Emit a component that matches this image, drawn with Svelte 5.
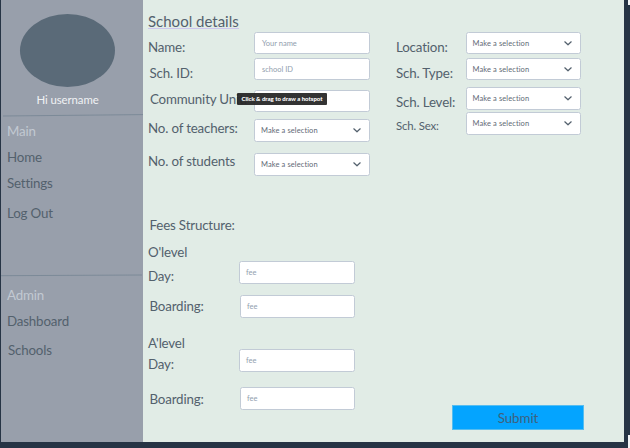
<script>
  // gap: space above the item; inset: shift from the column's left edge
  const nav = [
    { text: 'Home', gap: 6 },
    { text: 'Settings', gap: 6 },
    { text: 'Log Out', gap: 10 }
  ];
  const adminNav = [
    { text: 'Dashboard', gap: 6, inset: 0 },
    { text: 'Schools', gap: 9, inset: 1 }
  ];
  const labels = [
    { text: 'Name:', gap: 5, inset: 0 },
    { text: 'Sch. ID:', gap: 6, inset: 1.5 },
    { text: 'Community Unit:', gap: 6, inset: 2 },
    { text: 'No. of teachers:', gap: 8.5, inset: 0 },
    { text: 'No. of students', gap: 13.5, inset: 0 }
  ];
  const fields = [
    { hint: 'Your name', gap: 0, h: 22 },
    { hint: 'school ID', gap: 4, h: 22 },
    { hint: '', gap: 10, h: 22 },
    { select: true, gap: 7, h: 23 },
    { select: true, gap: 11, h: 23 }
  ];
  const rightLabels = [
    { text: 'Location:', gap: 0 },
    { text: 'Sch. Type:', gap: 6 },
    { text: 'Sch. Level:', gap: 9 },
    { text: 'Sch. Sex:', gap: 4, small: true }
  ];
  const rightFields = [
    { gap: 0, h: 22 },
    { gap: 4, h: 22 },
    { gap: 7, h: 23 },
    { gap: 2, h: 23 }
  ];
  const feeLabels = [
    { text: 'Fees Structure:', gap: 0, inset: 1.5 },
    { text: "O'level", gap: 7, inset: 0 },
    { text: 'Day:', gap: 4, inset: 0 },
    { text: 'Boarding:', gap: 10, inset: 1.5 },
    { text: "A'level", gap: 17, inset: 0 },
    { text: 'Day:', gap: 1, inset: 0 },
    { text: 'Boarding:', gap: 15, inset: 1.5 }
  ];
  const feeFields = [
    { gap: 0, inset: 0 },
    { gap: 11, inset: 1 },
    { gap: 31, inset: 0 },
    { gap: 15, inset: 1 }
  ];
</script>

{#snippet label(item)}
  <div class="label" class:small={item.small} style:margin-top="{item.gap}px" style:margin-left="{item.inset ?? 0}px">{item.text}</div>
{/snippet}

{#snippet select(item)}
  <div class="field select" class:short={item.h === 22} style:margin-top="{item.gap}px" style:height="{item.h}px">
    <span>Make a selection</span>
    <svg width="8" height="5" viewBox="0 0 8 5"><path d="M.8.8 4 3.8 7.2.8" fill="none" stroke="#53606d" stroke-width="1.2" stroke-linecap="round" stroke-linejoin="round" /></svg>
  </div>
{/snippet}

<div class="screen">
  <aside>
    <div class="avatar"></div>
    <div class="user">Hi username</div>
    <svg class="rule" width="142" height="3" viewBox="0 0 142 3"><path d="M2 2 142 .6" stroke="#7c8a98" /></svg>
    <div class="label heading main-heading">Main</div>
    {#each nav as item}{@render label(item)}{/each}
    <svg class="rule second" width="142" height="3" viewBox="0 0 142 3"><path d="M0 1.7 141 1" stroke="#7c8a98" /></svg>
    <div class="label heading admin-heading">Admin</div>
    {#each adminNav as item}{@render label(item)}{/each}
  </aside>

  <main>
    <h1>School details</h1>
    <section class="details">
      <div class="labels">
        {#each labels as item}{@render label(item)}{/each}
      </div>
      <div class="fields">
        {#each fields as item}
          {#if item.select}
            {@render select(item)}
          {:else}
            <div class="field short" style:margin-top="{item.gap}px" style:height="{item.h}px">{item.hint}</div>
          {/if}
        {/each}
        <div class="tooltip">Click &amp; drag to draw a hotspot</div>
      </div>
      <div class="right-labels">
        {#each rightLabels as item}{@render label(item)}{/each}
      </div>
      <div class="right-fields">
        {#each rightFields as item}{@render select(item)}{/each}
      </div>
    </section>

    <section class="fees">
      <div class="fee-labels">
        {#each feeLabels as item}{@render label(item)}{/each}
      </div>
      <div class="fee-fields">
        {#each feeFields as item}
          <div class="field fee" style:margin-top="{item.gap}px" style:margin-left="{item.inset}px">fee</div>
        {/each}
      </div>
      <button>Submit</button>
    </section>
  </main>
  <div class="edge"><i></i><i class="bottom"></i></div>
</div>

<style>
  .screen {
    display: flex;
    box-sizing: border-box;
    width: 630px;
    height: 448px;
    padding: 0 0 6px 1px;
    overflow: hidden;
    background: #263445;
    color: #53616d;
    font-family: Lato, sans-serif;
    font-size: 13.33px;
    letter-spacing: -0.17px;
  }
  aside {
    box-sizing: border-box;
    width: 142px;
    padding: 14px 0 0 6px;
    background: #989fab;
  }
  .avatar {
    width: 95px;
    height: 73px;
    margin-left: 13px;
    border-radius: 50%;
    background: #5a6a78;
  }
  .user {
    width: 121px;
    margin-top: 5px;
    color: #f0f2f4;
    font-size: 11.4px;
    letter-spacing: -0.08px;
    line-height: 16px;
    text-align: center;
  }
  .rule {
    display: block;
    margin: 6px 0 0 -6px;
  }
  .rule.second { margin-top: 51px; }
  .label {
    height: 20px;
    line-height: 20px;
    white-space: nowrap;
  }
  .small { font-size: 11.4px; }
  .heading { color: #c2c9d2; }
  .main-heading { margin-top: 4px; }
  .admin-heading { margin-top: 8px; }
  main {
    box-sizing: border-box;
    width: 481px;
    padding: 13px 0 0 5px;
    background: #e1ece6;
  }
  h1 {
    width: 91px;
    height: 15px;
    margin: 0;
    border-bottom: 1px solid #cbc5ed;
    font-size: 15px;
    font-weight: 400;
    letter-spacing: 0;
    line-height: 17px;
    white-space: nowrap;
  }
  .details {
    display: flex;
    height: 183px;
  }
  .labels {
    width: 106px;
    padding-top: 3px;
  }
  .fields {
    position: relative;
    width: 116px;
    padding-top: 3px;
  }
  .right-labels {
    width: 70px;
    padding: 8px 0 0 26px;
  }
  .right-fields {
    width: 115px;
    margin-left: -0.5px;
    padding-top: 3px;
  }
  .field {
    display: flex;
    align-items: center;
    box-sizing: border-box;
    padding: 0 8px 0 7px;
    border: 1px solid #c2cbd6;
    border-radius: 2.5px;
    background: #fff;
    color: #929eae;
    font-size: 7.5px;
    letter-spacing: 0;
    line-height: 10px;
  }
  .short { padding-top: 1px; }
  .select {
    justify-content: space-between;
    padding-left: 6px;
    color: #5f6a76;
    letter-spacing: 0.1px;
  }
  .tooltip {
    position: absolute;
    top: 64px;
    left: -17px;
    width: 90px;
    height: 12px;
    border-radius: 1px;
    background: rgba(38, 38, 38, 0.94);
    color: #fff;
    font-size: 6px;
    font-weight: 900;
    letter-spacing: 0;
    line-height: 12px;
    text-align: center;
    white-space: nowrap;
  }
  .fees {
    display: flex;
    padding-top: 3px;
  }
  .fee-labels { width: 91px; }
  .fee-fields {
    width: 116px;
    padding-top: 46px;
  }
  .fee {
    height: 23px;
    padding-left: 6px;
  }
  button {
    width: 132px;
    height: 25px;
    margin: 190px 0 0 97px;
    padding: 0;
    border: 1px solid #55bdf0;
    background: #04a4ff;
    color: #3f617c;
    font: inherit;
    letter-spacing: -0.05px;
  }
  .edge {
    display: flex;
    flex-direction: column;
    justify-content: space-between;
    align-items: flex-end;
    height: 448px;
    flex: 1;
  }
  .edge i {
    width: 2px;
    height: 5px;
    background: #f4f6f8;
  }
  .edge .bottom { height: 13px; }
</style>
